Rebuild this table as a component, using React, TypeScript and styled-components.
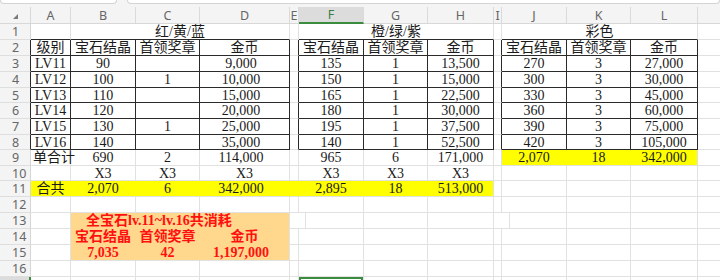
import React from 'react';
import styled, { createGlobalStyle } from 'styled-components';

const GRID = '#e1e1e1';
const DARK = '#2a2a2a';
const YELLOW = '#ffff00';
const ORANGE = '#ffd78d';
const GREEN = '#3c8c40';
const HEAD_BG = '#f4f4f4';

const COL_W = [40, 65, 64, 90, 9, 65, 64, 66, 8, 65, 64, 67, 90];
const COL_NAMES = ['A', 'B', 'C', 'D', 'E', 'F', 'G', 'H', 'I', 'J', 'K', 'L', 'M'];
const ROW_H = [16, 16, 16, 16, 15, 16, 16, 15, 16, 15, 16, 16, 16, 16, 16, 16, 20];
const TABLE_COLS = [0, 1, 2, 3, 5, 6, 7, 9, 10, 11];

// row -> cell texts by column (A = 0)
const DATA: Record<number, string[]> = {
  1: ['', '红/黄/蓝', '', '', '', '橙/绿/紫', '', '', '', '彩色'],
  2: ['级别', '宝石结晶', '首领奖章', '金币', '', '宝石结晶', '首领奖章', '金币', '', '宝石结晶', '首领奖章', '金币'],
  3: ['LV11', '90', '', '9,000', '', '135', '1', '13,500', '', '270', '3', '27,000'],
  4: ['LV12', '100', '1', '10,000', '', '150', '1', '15,000', '', '300', '3', '30,000'],
  5: ['LV13', '110', '', '15,000', '', '165', '1', '22,500', '', '330', '3', '45,000'],
  6: ['LV14', '120', '', '20,000', '', '180', '1', '30,000', '', '360', '3', '60,000'],
  7: ['LV15', '130', '1', '25,000', '', '195', '1', '37,500', '', '390', '3', '75,000'],
  8: ['LV16', '140', '', '35,000', '', '140', '1', '52,500', '', '420', '3', '105,000'],
  9: ['单合计', '690', '2', '114,000', '', '965', '6', '171,000', '', '2,070', '18', '342,000'],
  10: ['', 'X3', 'X3', 'X3', '', 'X3', 'X3', 'X3'],
  11: ['合共', '2,070', '6', '342,000', '', '2,895', '18', '513,000'],
  13: ['', '全宝石lv.11~lv.16共消耗'],
  14: ['', '宝石结晶', '首领奖章', '金币'],
  15: ['', '7,035', '42', '1,197,000'],
};

const MERGES: Record<number, number[]> = { 1: [1, 5, 9], 13: [1] };

const fillOf = (r: number, c: number) => {
  if (r === 9 && c >= 9 && c <= 11) return YELLOW;
  if (r === 11 && c <= 7) return YELLOW;
  if (r >= 13 && r <= 15 && c >= 1 && c <= 3) return ORANGE;
  return undefined;
};

const GlobalStyle = createGlobalStyle`
  html, body { margin: 0; padding: 0; background: #fff; }
  body { overflow: hidden; }
`;

const Page = styled.div`
  width: 720px;
  height: 280px;
  overflow: hidden;
  background: #fff;
`;

const FormulaEdge = styled.div`
  display: flex;
  gap: 10px;
  height: 7px;
  background: ${HEAD_BG};
`;

const EdgeBox = styled.div<{ $w?: number }>`
  box-sizing: border-box;
  height: 4px;
  flex: ${p => (p.$w ? `0 0 ${p.$w}px` : '1')};
  background: #fff;
  border: 1px solid #d4d4d4;
  border-top: none;
  border-radius: 0 0 5px 5px;
`;

const Sheet = styled.div`
  display: grid;
  grid-template-columns: 31px ${COL_W.map(w => `${w}px`).join(' ')};
  grid-template-rows: 17px ${ROW_H.map(h => `${h}px`).join(' ')};
  background: #fff;
`;

const Corner = styled.div`
  box-sizing: border-box;
  display: flex;
  align-items: center;
  justify-content: center;
  background: ${HEAD_BG};
  border-right: 1px solid #d8d8d8;
  border-bottom: 1px solid #d8d8d8;
`;

const CornerMark = styled.span`
  width: 0;
  height: 0;
  margin: 3px 0 0 1px;
  border-left: 5px solid transparent;
  border-bottom: 5px solid #7a7a7a;
`;

const ColHead = styled.div<{ $active?: boolean }>`
  box-sizing: border-box;
  display: flex;
  align-items: center;
  justify-content: center;
  overflow: hidden;
  font-family: 'Noto Sans', 'Liberation Sans', sans-serif;
  font-size: 12.5px;
  color: ${p => (p.$active ? '#3a7d3e' : '#666')};
  background: ${p => (p.$active ? '#dcdcdc' : HEAD_BG)};
  border-right: 1px solid #dadada;
  border-bottom: ${p => (p.$active ? `2px solid ${GREEN}` : '1px solid #d8d8d8')};
`;

const RowHead = styled.div<{ $dark?: boolean; $active?: boolean }>`
  box-sizing: border-box;
  display: flex;
  align-items: center;
  padding-left: 12px;
  font-family: 'Noto Sans', 'Liberation Sans', sans-serif;
  font-size: 12.5px;
  color: #666;
  background: ${p => (p.$active ? '#dcdcdc' : HEAD_BG)};
  border-bottom: 1px solid #dedede;
  border-right: ${p =>
    p.$active ? `2px solid ${GREEN}` : `1px solid ${p.$dark ? DARK : '#d6d6d6'}`};
`;

const Cell = styled.div<{
  $span: number;
  $fill?: string;
  $rb: string;
  $bb: string;
  $left?: boolean;
  $pl: number;
  $pr: number;
  $red?: boolean;
  $sel?: boolean;
}>`
  grid-column: span ${p => p.$span};
  box-sizing: border-box;
  display: flex;
  align-items: center;
  justify-content: ${p => (p.$left ? 'flex-start' : 'center')};
  padding: 1px ${p => p.$pr}px 0 ${p => p.$pl}px;
  white-space: nowrap;
  overflow: visible;
  font-family: 'Liberation Serif', 'Noto Sans CJK SC', serif;
  font-size: 14px;
  line-height: 1;
  font-weight: ${p => (p.$red ? 700 : 400)};
  color: ${p => (p.$red ? '#ff1010' : '#1a1a1a')};
  background: ${p => p.$fill ?? 'transparent'};
  border-right: 1px solid ${p => p.$rb};
  border-bottom: 1px solid ${p => p.$bb};
  box-shadow: ${p => (p.$sel ? `inset 0 0 0 2px ${GREEN}` : 'none')};
`;

const renderRow = (r: number) => {
  const texts = DATA[r] ?? [];
  const merges = MERGES[r] ?? [];
  const cells: React.ReactNode[] = [];
  let c = 0;
  while (c < COL_NAMES.length) {
    const span = merges.includes(c) ? 3 : 1;
    const last = c + span - 1;
    const fill = fillOf(r, c);
    const rightDark = r >= 2 && r <= 8 && last <= 11;
    const bottomDark = r >= 1 && r <= 8 && TABLE_COLS.includes(c);
    const rb = rightDark ? DARK : fill && fillOf(r, last + 1) === fill ? fill : GRID;
    const bb = bottomDark ? DARK : fill && fillOf(r + 1, c) === fill ? fill : GRID;
    const numInD = c === 3 && r !== 2 && r !== 10 && r !== 14;
    const left = (r === 9 && c === 0) || r === 13;
    cells.push(
      <Cell
        key={c}
        $span={span}
        $fill={fill}
        $rb={rb}
        $bb={bb}
        $left={left}
        $pl={r === 13 ? 15 : left ? 2 : 0}
        $pr={numInD ? 7 : 0}
        $red={r >= 13 && r <= 15}
        $sel={r === 17 && c === 5}
      >
        {texts[c] ?? ''}
      </Cell>
    );
    c += span;
  }
  return cells;
};

export default function App() {
  return (
    <Page>
      <GlobalStyle />
      <FormulaEdge>
        <EdgeBox $w={117} />
        <EdgeBox />
      </FormulaEdge>
      <Sheet>
        <Corner>
          <CornerMark />
        </Corner>
        {COL_NAMES.map(name => (
          <ColHead key={name} $active={name === 'F'}>
            {name}
          </ColHead>
        ))}
        {ROW_H.map((_, i) => {
          const r = i + 1;
          return (
            <React.Fragment key={r}>
              <RowHead $dark={r >= 2 && r <= 8} $active={r === 17}>
                {r}
              </RowHead>
              {renderRow(r)}
            </React.Fragment>
          );
        })}
      </Sheet>
    </Page>
  );
}
